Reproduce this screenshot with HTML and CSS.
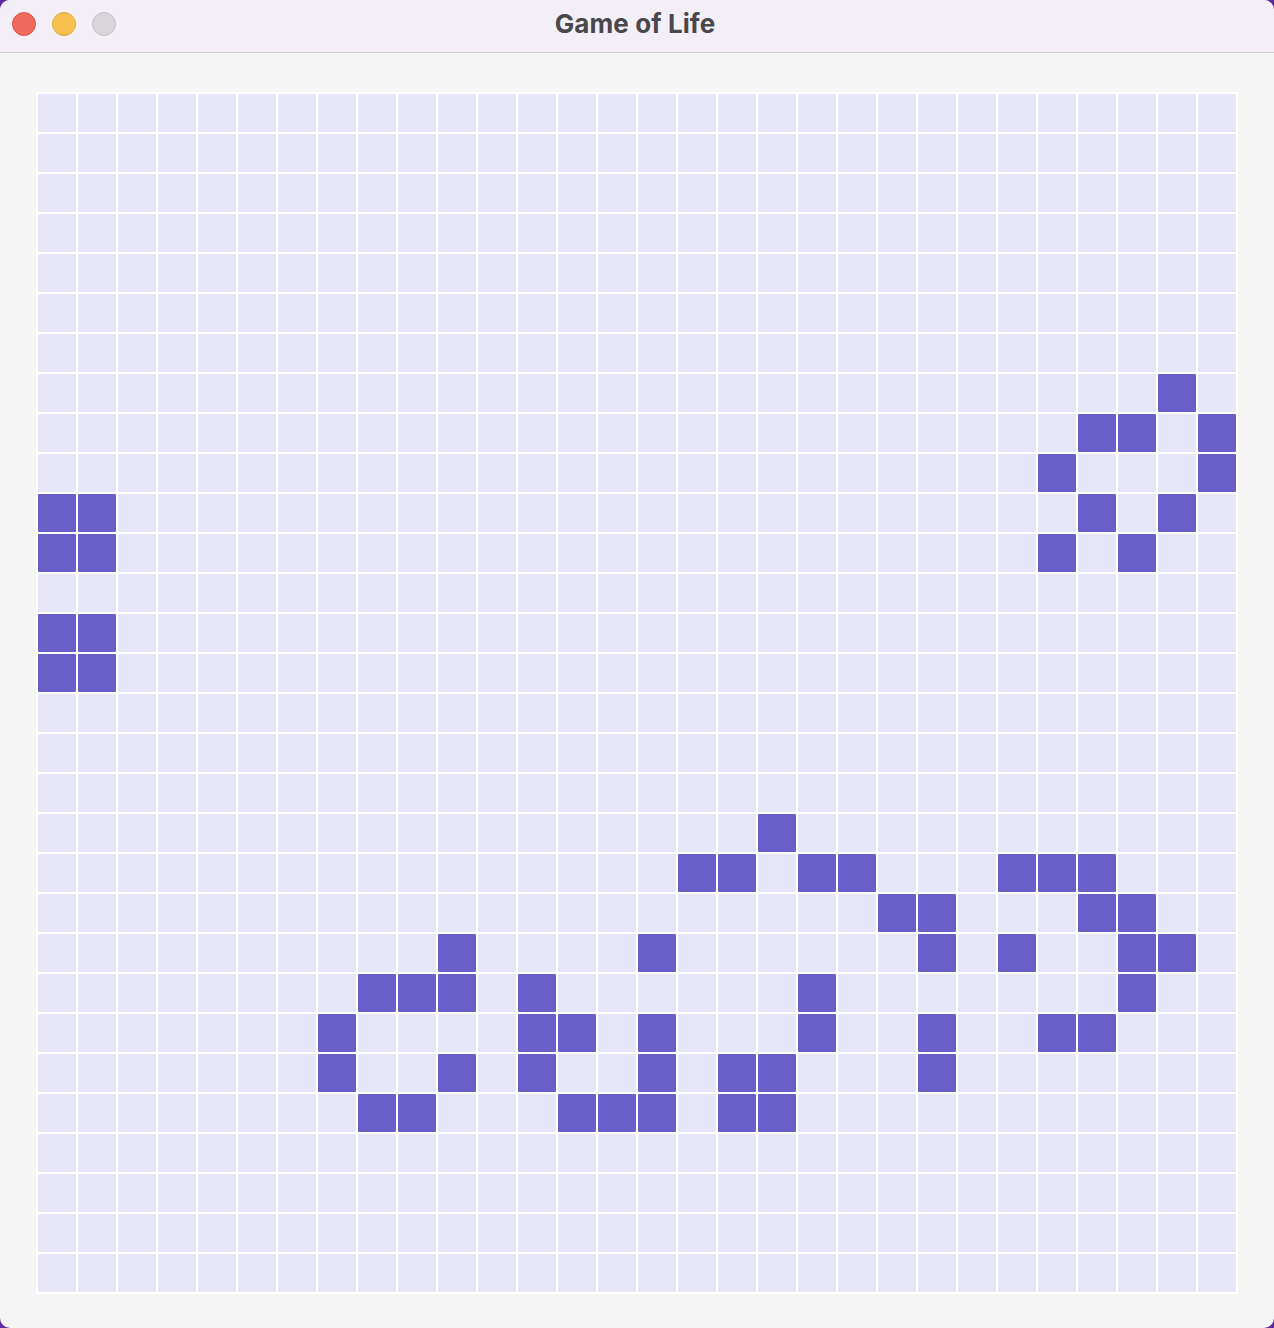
FILE: index.html
```html
<!DOCTYPE html>
<html lang="en">
<head>
<meta charset="utf-8">
<title>Game of Life</title>
<link rel="stylesheet" href="styles.css">
</head>
<body>
<div class="window">
  <header class="titlebar">
    <div class="lights">
      <span class="light red"></span>
      <span class="light yellow"></span>
      <span class="light gray"></span>
    </div>
    <h1 class="title">Game of Life</h1>
  </header>
  <main class="content">
    <div class="board" id="board"></div>
  </main>
</div>
<script src="app.js"></script>
</body>
</html>
```
FILE: styles.css
```css
html, body {
  margin: 0;
  padding: 0;
}
body {
  background: #5b2ba3;
  width: 1274px;
  height: 1328px;
  overflow: hidden;
  font-family: Inter, "Noto Sans", "Liberation Sans", sans-serif;
}
.window {
  width: 1274px;
  height: 1328px;
  border-radius: 10px;
  overflow: hidden;
  background: #f5f5f5;
  display: flex;
  flex-direction: column;
}
.titlebar {
  position: relative;
  height: 53px;
  flex: 0 0 53px;
  background: #f4eff6;
  border-bottom: 1px solid #d3d0d5;
  display: flex;
  align-items: center;
  justify-content: center;
  padding-bottom: 5px;
  box-sizing: border-box;
}
.lights {
  position: absolute;
  left: 12px;
  top: 12px;
  display: flex;
  gap: 16px;
}
.light {
  width: 22px;
  height: 22px;
  border-radius: 50%;
  display: block;
}
.red { background: #ee6a5f; border: 1px solid #d8574d; }
.yellow { background: #f7c14f; border: 1px solid #dea73b; }
.gray { background: #dad5db; border: 1px solid #c3bec4; }
.title {
  margin: 0;
  font-size: 26px;
  font-weight: 700;
  color: #49484d;
  letter-spacing: 0.1px;
  padding-right: 4px;
}
.content {
  flex: 1;
  padding: 39px 36px 36px;
  display: flex;
  justify-content: center;
  align-items: flex-start;
}
.board {
  display: grid;
  grid-template-columns: repeat(30, 38px);
  grid-auto-rows: 38px;
  gap: 2px;
  padding: 2px;
  background: #ffffff;
}
.cell {
  background: #e6e6f8;
  border-radius: 1px;
}
.cell.alive {
  background: #6a5ec9;
}
```
FILE: app.js
```js
var alive = {
  7: [28],
  8: [26, 27, 29],
  9: [25, 29],
  10: [0, 1, 26, 28],
  11: [0, 1, 25, 27],
  13: [0, 1],
  14: [0, 1],
  18: [18],
  19: [16, 17, 19, 20, 24, 25, 26],
  20: [21, 22, 26, 27],
  21: [10, 15, 22, 24, 27, 28],
  22: [8, 9, 10, 12, 19, 27],
  23: [7, 12, 13, 15, 19, 22, 25, 26],
  24: [7, 10, 12, 15, 17, 18, 22],
  25: [8, 9, 13, 14, 15, 17, 18]
};
var board = document.getElementById('board');
for (var r = 0; r < 30; r++) {
  for (var c = 0; c < 30; c++) {
    var d = document.createElement('div');
    d.className = 'cell';
    if (alive[r] && alive[r].indexOf(c) !== -1) d.className += ' alive';
    board.appendChild(d);
  }
}
```
